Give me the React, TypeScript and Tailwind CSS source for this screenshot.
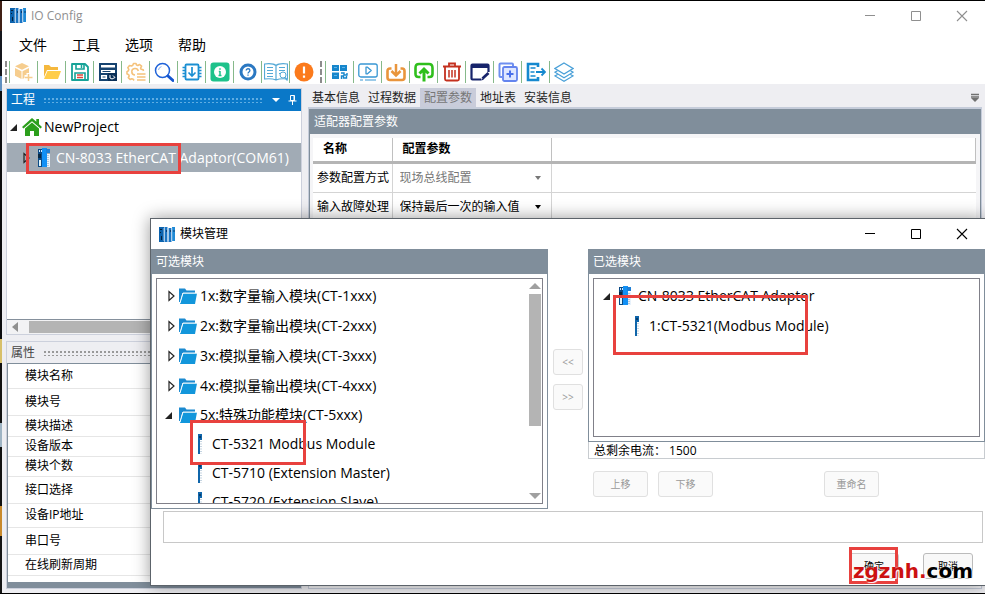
import React, { useState } from "react";
import type { ReactNode } from "react";

/* ---------- icons ---------- */

const Svg = ({ children, size = "size-5", box = "0 0 20 20" }: { children: ReactNode; size?: string; box?: string }) => (
  <svg viewBox={box} className={`${size} block shrink-0`} fill="none" aria-hidden="true">
    {children}
  </svg>
);

const RackIcon = () => (
  <Svg size="size-[17px]" box="0 0 17 17">
    <path d="M0 1h5v15H0z" fill="#0b62ad" />
    <path d="M5.500 1h3v15h-3zM9.500 2h3v14h-3z" fill="#1b75c4" />
    <path d="M13 1h3v14h-3z" fill="#1f8ad6" />
    <path d="M1 3h2v1H1zM1 6h1v1H1zM2 10h1v4H2z" fill="#06213d" />
    <path d="M5 2v13M9 2v13M12.800 2v13" stroke="#d5e8f8" strokeWidth="0.700" />
    <path d="M7 4h1v2H7zM11 4h1v2h-1zM14.500 4h1v2h-1z" fill="#0a3e73" />
  </Svg>
);

const AdaptorIcon = () => (
  <Svg size="w-[14px] h-5" box="0 0 14 20">
    <path d="M1 1h6v18H1z" fill="#0a4a86" />
    <path d="M5 0h5v19H5z" fill="#1190f5" />
    <path d="M9 1h4v4H9z" fill="#1e7fd6" />
    <path d="M10 6h3v13h-3z" fill="#e8f2fb" />
    <path d="M11 7v12" stroke="#7b9cba" strokeDasharray="1 1" />
    <path d="M2 2h1v2H2zM4 2h1v2H4z" fill="#cfe9ff" />
    <path d="M2 12h2v6H2z" fill="#dff6ff" />
    <path d="M1 6h3v4H1z" fill="#062743" />
  </Svg>
);

const ModuleIcon = () => (
  <Svg size="w-1 h-5" box="0 0 4 20">
    <path d="M0 0h2v20H0z" fill="#0f65aa" />
    <path d="M0 0h4v6H0z" fill="#0f65aa" />
    <path d="M3 7v13" stroke="#8ba9c2" strokeDasharray="1 1.500" />
    <path d="M1 2h2v2H1z" fill="#063c6c" />
  </Svg>
);

const FolderIcon = () => (
  <Svg size="w-[18px] h-4" box="0 0 18 16">
    <path d="M0 0.500h6l1.500 2H16V5H3.500L1 14H0z" fill="#1b8ad0" />
    <path d="M4 5.500h14L16 16H1z" fill="#1296db" />
    <path d="M1 15L4 5h14" stroke="#fff" strokeWidth="0.900" />
  </Svg>
);

const HomeIcon = () => (
  <Svg size="w-5 h-[18px]" box="0 0 20 18">
    <path d="M10 0L0 9l1.500 1.600L10 3.200l8.500 7.400L20 9l-3-2.700V1h-2.700v2.800z" fill="#2c9f1c" />
    <path d="M10 4.500L3 10.600V18h5v-5h4v5h5v-7.400z" fill="#2c9f1c" />
  </Svg>
);

const Closed = () => (
  <Svg size="w-[7px] h-3" box="0 0 7 12">
    <path d="M1 1.500v9L6 6z" stroke="#222" strokeWidth="1.200" />
  </Svg>
);
const Opened = () => (
  <Svg size="w-[7px] h-[7px]" box="0 0 7 7">
    <path d="M7 0v7H0z" fill="#222" />
  </Svg>
);

type Tool = { name: string; icon: ReactNode };

const fileTools: Tool[] = [
  {
    name: "新建工程",
    icon: (
      <>
        <path d="M8 1l7 3.300-7 3.500-7-3.500zM1 6l6.500 3.300V17L1 13.800zM15 6L8.500 9.300V17l2-1v-3h2v-2H15z" fill="#f6cd8e" />
        <path d="M14.500 12v7M11 15.500h7.500" stroke="#f6cd8e" strokeWidth="1.500" />
      </>
    ),
  },
  {
    name: "打开",
    icon: (
      <>
        <path d="M2 3h5l2 2h7v3H5l-3 7z" fill="#f5b83d" />
        <path d="M5.500 9H19l-3 8H2z" fill="#ffcd4a" />
      </>
    ),
  },
  {
    name: "保存",
    icon: (
      <>
        <path d="M2 2h13l3 3v13H2z" stroke="#17a398" strokeWidth="1.800" strokeLinejoin="round" />
        <path d="M6 2v5h8V2M5 18v-7h10v7" stroke="#17a398" strokeWidth="1.600" />
        <path d="M11.500 3v3" stroke="#17a398" strokeWidth="1.500" />
        <path d="M7 13h6M7 15.500h6" stroke="#e0453a" strokeWidth="1.300" />
      </>
    ),
  },
  {
    name: "控制台",
    icon: (
      <>
        <path d="M1 1h18v18H1z" fill="#15426f" />
        <path d="M3 3h14v2.500H3zM3 8h14v3H3zM3 13h6v4H3z" fill="#fff" />
        <path d="M4.500 9.500h8M4.500 15h3" stroke="#15426f" />
        <path d="M10 11h9v8h-9z" fill="#0b2f57" />
        <path d="M12 13v3l2 1 3-1.500-2-2" stroke="#fff" />
      </>
    ),
  },
  {
    name: "设置",
    icon: (
      <>
        <path d="M17.500 9l-.3-1.200-2-.5-.6-1.200 1-1.900-2-1.700-1.800 1-1.300-.4L10 1.500H7.500L6.800 3.300 5.500 4 3.500 3.500 1.800 5.700l1 1.700-.4 1.400-1.400.8v2.300l1.700.8.5 1.300-.9 1.600 1.800 1.900 1.700-.8 1.400.5L8 18.500" stroke="#f5c27c" strokeWidth="1.600" strokeLinejoin="round" />
        <path d="M9 13a3.300 3.300 0 1 1 3.300-4" stroke="#f5c27c" strokeWidth="1.500" />
        <path d="M11 12h8.500M11 15h8.500M11 18h8.500" stroke="#f5c27c" strokeWidth="1.500" />
      </>
    ),
  },
  {
    name: "搜索",
    icon: (
      <>
        <circle cx="8.500" cy="8.500" r="7" stroke="#1f62d8" strokeWidth="1.500" />
        <path d="M4.500 8a4 4 0 0 1 3-3.400" stroke="#8ab0f2" />
        <path d="M14 14l5 4.500" stroke="#1656cf" strokeWidth="3" strokeLinecap="round" />
      </>
    ),
  },
  {
    name: "下载",
    icon: (
      <>
        <rect x="3.500" y="2.500" width="13" height="15" rx="1" stroke="#1b8fd2" strokeWidth="1.800" />
        <path d="M0.500 5.500h3M0.500 8.500h3M0.500 11.500h3M0.500 14.500h3M16.500 5.500h3M16.500 8.500h3M16.500 11.500h3M16.500 14.500h3" stroke="#1b8fd2" strokeWidth="1.300" />
        <path d="M10 5v9M6.500 10.500L10 14l3.500-3.500" stroke="#1b8fd2" strokeWidth="1.700" />
      </>
    ),
  },
  {
    name: "信息",
    icon: (
      <>
        <rect x="0.500" y="0.500" width="19" height="19" rx="3" fill="#1ec28b" />
        <circle cx="10" cy="10" r="6" fill="#fff" />
        <path d="M10 6.200v1.600M10 9v4.500M8.800 9.500H10M8.500 13.500h3" stroke="#1ec28b" strokeWidth="1.500" />
      </>
    ),
  },
  {
    name: "帮助",
    icon: (
      <>
        <circle cx="10" cy="10" r="8.500" fill="#2b78c2" />
        <circle cx="10" cy="10" r="5.500" fill="#fff" />
        <path d="M8.200 8.500c0-2.400 3.700-2.300 3.700 0 0 1.400-1.900 1.400-1.900 3M10 12.500v1.300" stroke="#2b78c2" strokeWidth="1.300" />
      </>
    ),
  },
  {
    name: "手册",
    icon: (
      <>
        <path d="M12 3.500C9 1 5 1.500 0.500 2v15c4.500-.5 8-.5 11.500 1 3.500-1.500 7-1.500 11.500-1V2C19 1.500 15 1 12 3.500zV18" stroke="#54a9d6" strokeWidth="1.200" />
        <path d="M3 5.500h6M3 8.500h6M3 11.500h6M3 14.500h6M15 5.500h6M15 8.500h6M15 11.500h2" stroke="#54a9d6" />
        <circle cx="19" cy="13" r="3" fill="#fff" stroke="#54a9d6" />
        <path d="M21 15.500l2.500 3" stroke="#54a9d6" strokeWidth="1.300" />
      </>
    ),
  },
  {
    name: "警告",
    icon: (
      <>
        <circle cx="10" cy="10" r="9.500" fill="#fb7a1c" />
        <path d="M10 4.500v7M10 13.500v2.200" stroke="#fff" strokeWidth="2.200" />
      </>
    ),
  },
];

const deviceTools: Tool[] = [
  {
    name: "扫描",
    icon: (
      <>
        <path d="M2 3h7v6H2zM10 3h7v6h-7zM2 10.500h7v6.500H2z" fill="#1686cc" />
        <path d="M4 5.500h3M12 5.500h3M4 13.500h3" stroke="#5fb4e8" />
        <path d="M11 11h3v2h3v-2M11.500 17v-3h2v2h3v-2" stroke="#1686cc" strokeWidth="1.400" />
      </>
    ),
  },
  {
    name: "监控",
    icon: (
      <>
        <rect x="0.800" y="2" width="18.400" height="13" rx="2" stroke="#3897d3" strokeWidth="1.300" />
        <path d="M8 5.200v6.600h1.500L13.200 8.500 9.500 5.200z" stroke="#3897d3" strokeWidth="1.300" strokeLinejoin="round" />
        <path d="M2 18h3M7 18h11" stroke="#3897d3" strokeWidth="1.200" />
      </>
    ),
  },
  {
    name: "导入",
    icon: (
      <>
        <path d="M5.500 6.500H4q-2.500 0-2.500 2.500v6.500q0 2.500 2.500 2.500h12q2.500 0 2.500-2.500V9q0-2.500-2.500-2.500h-1.500" stroke="#e9953c" strokeWidth="2.600" />
        <path d="M10 2v11M5.500 9l4.500 4.500L14.500 9" stroke="#e9953c" strokeWidth="2.500" />
      </>
    ),
  },
  {
    name: "上传",
    icon: (
      <>
        <path d="M6.500 15H4.500C2.500 15 1.500 14 1.500 12V6C1.500 3 2.500 2 5 2h10c2.500 0 3.500 1 3.500 4v6c0 2-1 3-3 3h-2" stroke="#2fbf1c" strokeWidth="2.600" />
        <path d="M10 19.500V7M5.500 11.500L10 7l4.500 4.500" stroke="#2fbf1c" strokeWidth="3" />
      </>
    ),
  },
  {
    name: "删除",
    icon: (
      <>
        <path d="M1 4.500h18M7 4V1.500h6V4" stroke="#c4301f" strokeWidth="1.800" />
        <path d="M3 5v12q0 1.500 1.500 1.500h11q1.500 0 1.500-1.500V5" stroke="#c4301f" strokeWidth="1.800" />
        <path d="M7 8v7.500M10 8v7.500M13 8v7.500" stroke="#c4301f" strokeWidth="1.500" />
      </>
    ),
  },
  {
    name: "编辑",
    icon: (
      <>
        <path d="M1.500 2h17v4h-17z" fill="#17246b" />
        <path d="M11 17.500H2.500q-1 0-1-1v-13q0-1 1-1h15q1 0 1 1V10" stroke="#17246b" strokeWidth="2.200" />
        <path d="M12.500 16.500l6-5.500" stroke="#17246b" strokeWidth="2.800" />
        <path d="M11 18.500l1-2.500 1.800 1.700z" fill="#17246b" />
      </>
    ),
  },
  {
    name: "复制",
    icon: (
      <>
        <path d="M4 15H2.500q-1 0-1-1V2.500q0-1 1-1H14q1 0 1 1V4" stroke="#6f8ff0" strokeWidth="2" />
        <rect x="5" y="5" width="14" height="14" rx="1.500" stroke="#6484ee" strokeWidth="1.800" fill="#dfe7ff" />
        <path d="M12 8.500v7M8.500 12h7" stroke="#4a70ea" strokeWidth="2" />
      </>
    ),
  },
  {
    name: "导出",
    icon: (
      <>
        <path d="M12 5V2H2v16h10v-3" stroke="#1689cf" strokeWidth="2.600" />
        <path d="M4.500 6h5M4.500 10h4M4.500 14h5" stroke="#1689cf" strokeWidth="1.600" />
        <path d="M10 10h9M15.500 6.500L19 10l-3.500 3.500" stroke="#1689cf" strokeWidth="1.800" />
      </>
    ),
  },
  {
    name: "图层",
    icon: (
      <>
        <path d="M10 1l9 5.500-9 5.500-9-5.500z" stroke="#4aa0d8" strokeWidth="1.300" />
        <path d="M3.500 8.700L1 10.200l9 5.500 9-5.500-2.500-1.500M3.500 12.400L1 13.900l9 5.300 9-5.300-2.500-1.500" stroke="#4aa0d8" strokeWidth="1.200" />
      </>
    ),
  },
];

/* ---------- shared pieces ---------- */

const Grip = () => <span className="h-[22px] w-0 border-l-2 border-dashed border-[#8c8c8c]" />;

const ToolStrip = ({ tools }: { tools: Tool[] }) => (
  <div className="flex">
    {tools.map((t) => (
      <button
        key={t.name}
        type="button"
        aria-label={t.name}
        className="flex h-[22px] w-7 items-center justify-center border-l border-[#86b98a]"
      >
        <Svg size={t.name === "手册" ? "w-6 h-5" : "size-5"} box={t.name === "手册" ? "0 0 24 20" : "0 0 20 20"}>
          {t.icon}
        </Svg>
      </button>
    ))}
  </div>
);

const WindowControls = ({ color }: { color: string }) => (
  <div className={`ml-auto flex ${color}`}>
    <button type="button" aria-label="最小化" className="flex h-7 w-[46px] items-center justify-center">
      <Svg size="size-3" box="0 0 12 12">
        <path d="M1 5.500h10" stroke="currentColor" />
      </Svg>
    </button>
    <button type="button" aria-label="最大化" className="flex h-7 w-[46px] items-center justify-center">
      <Svg size="size-3" box="0 0 12 12">
        <path d="M1.500 1.500h9v9h-9z" stroke="currentColor" />
      </Svg>
    </button>
    <button type="button" aria-label="关闭" className="flex h-7 w-[46px] items-center justify-center">
      <Svg size="size-3" box="0 0 12 12">
        <path d="M1 1l10 10M11 1L1 11" stroke="currentColor" strokeWidth="1.100" />
      </Svg>
    </button>
  </div>
);

const Dots = ({ color }: { color: string }) => (
  <span
    className={`h-[6px] min-w-0 flex-1 bg-[length:4px_4px] ${color}`}
  />
);

const Mark = ({ place }: { place: string }) => (
  <span className={`pointer-events-none absolute z-20 border-[3px] border-[#e8413e] ${place}`} />
);

/* ---------- main window ---------- */

const properties: [string, string][] = [
  ["模块名称", "h-6"],
  ["模块号", "h-[27px]"],
  ["模块描述", "h-[21px]"],
  ["设备版本", "h-5"],
  ["模块个数", "h-5"],
  ["接口选择", "h-[27px]"],
  ["设备IP地址", "h-6"],
  ["串口号", "h-[27px]"],
  ["在线刷新周期", "h-[21px]"],
];

const ProjectPanel = () => (
  <section className="flex h-[247px] flex-col border border-[#ccd0dc] bg-white">
    <header className="flex h-[22px] shrink-0 items-center gap-2 bg-[#0a78c8] px-1 text-xs text-white">
      <h2>工程</h2>
      <Dots color="bg-[radial-gradient(circle,#5fade3_0.8px,transparent_1px)]" />
      <Svg size="w-2 h-1" box="0 0 8 4">
        <path d="M0 0h8L4 4z" fill="#fff" />
      </Svg>
      <Svg size="w-[9px] h-[10px]" box="0 0 9 10">
        <path d="M2.500 0.500h4v5h-4zM0.500 6h8M4.500 6v4M6 0.500v5" stroke="#fff" />
      </Svg>
    </header>
    <ul className="flex-1 text-sm whitespace-nowrap">
      <li className="flex h-8 items-center gap-[5px] pl-[3px]">
        <Opened />
        <HomeIcon />
        <span className="-ml-[3px]">NewProject</span>
      </li>
      <li className="relative flex h-[29px] items-center bg-[#a1abb5] pl-4 text-white">
        <Closed />
        <span className="mr-[5px] ml-[7px]">
          <AdaptorIcon />
        </span>
        <span>CN-8033 EtherCAT Adaptor(COM61)</span>
        <Mark place="top-0 left-[19px] h-[31px] w-[155px]" />
      </li>
    </ul>
    <div className="flex h-[15px] shrink-0 items-center border-t border-[#85909c] bg-[#f2f2f4] pl-[5px]">
      <Svg size="w-[6px] h-[10px]" box="0 0 6 10">
        <path d="M6 0v10L0 5z" fill="#8f8f8f" />
      </Svg>
      <span className="ml-[11px] h-3 w-56 bg-[#b4b4b4]" />
    </div>
  </section>
);

const PropertyPanel = () => (
  <section className="flex flex-col border border-[#ccd0dc]">
    <header className="flex h-[21px] items-center gap-2 bg-[#eeeef2] px-1 text-xs text-[#444]">
      <h2>属性</h2>
      <Dots color="bg-[radial-gradient(circle,#999_0.8px,transparent_1px)]" />
    </header>
    <div className="border-t border-l border-[#808e9b] bg-white pb-[6px]">
      <table className="w-full border-collapse text-xs">
        <tbody>
          {properties.map(([name, h]) => (
            <tr key={name} className={`${h} border-b border-[#e6e6e6]`}>
              <th scope="row" className="p-0 pl-[17px] text-left leading-[18px] font-normal">
                {name}
              </th>
            </tr>
          ))}
        </tbody>
      </table>
    </div>
    <div className="h-[6px] bg-[#808e9b]" />
  </section>
);

const Combo = ({ label, value, disabled }: { label: string; value: string; disabled?: boolean }) => (
  <div className={`relative ${disabled ? "text-[#777]" : "text-black"}`}>
    <select
      aria-label={label}
      disabled={disabled}
      defaultValue={value}
      className="h-7 w-full appearance-none bg-transparent pl-[7px] text-xs opacity-100"
    >
      <option>{value}</option>
    </select>
    <span className="pointer-events-none absolute top-3 right-[10px]">
      <Svg size="w-[6px] h-1" box="0 0 6 4">
        <path d="M0 0h6L3 4z" fill="currentColor" />
      </Svg>
    </span>
  </div>
);

const ParameterPanel = () => {
  const tabs = ["基本信息", "过程数据", "配置参数", "地址表", "安装信息"];
  const [active, setActive] = useState("配置参数");
  return (
    <section className="flex min-w-0 flex-1 flex-col">
      <div className="flex h-[19px] items-stretch text-xs" role="tablist">
        {tabs.map((t) => (
          <button
            key={t}
            type="button"
            role="tab"
            aria-selected={t === active}
            onClick={() => setActive(t)}
            className={`px-1 whitespace-nowrap ${t === active ? "bg-[#c9ccda] text-[#777]" : "text-[#1e1e1e]"}`}
          >
            {t}
          </button>
        ))}
        <span className="mr-[3px] ml-auto self-center">
          <Svg size="w-2 h-[9px]" box="0 0 8 9">
            <path d="M0 1.500h8M0 4h8" stroke="#717171" strokeWidth="1.400" />
            <path d="M0 5h8L4 9z" fill="#717171" />
          </Svg>
        </span>
      </div>
      <div className="flex-1 border border-t-2 border-[#c5ccda] bg-[#f5f5f7]">
        <h2 className="h-[25px] bg-[#808e9b] pl-[5px] text-xs leading-[25px] text-white">适配器配置参数</h2>
        <div className="border-x border-[#808e9b] pt-1 pr-1 pl-[3px]">
          <table className="w-full table-fixed border-collapse bg-white text-xs">
            <colgroup>
              <col className="w-[79px]" />
              <col className="w-[159px]" />
              <col />
            </colgroup>
            <thead>
              <tr className="h-6 border-b-[3px] border-[#b5b5b5] text-left">
                <th className="border-r border-[#c0c0c0] py-0 pl-[10px] font-bold">名称</th>
                <th className="border-r border-[#c0c0c0] py-0 pl-[10px] font-bold">配置参数</th>
                <th className="border-r border-[#c0c0c0]" aria-label="备注" />
              </tr>
            </thead>
            <tbody>
              <tr className="h-[29px] border-b border-[#d4d4d4]">
                <td className="border-r border-[#d4d4d4] pl-1 whitespace-nowrap">参数配置方式</td>
                <td className="border-r border-[#d4d4d4]">
                  <Combo label="参数配置方式" value="现场总线配置" disabled />
                </td>
                <td />
              </tr>
              <tr className="h-[29px] border-b border-[#d4d4d4]">
                <td className="border-r border-[#d4d4d4] pl-1 whitespace-nowrap">输入故障处理</td>
                <td className="border-r border-[#d4d4d4]">
                  <Combo label="输入故障处理" value="保持最后一次的输入值" />
                </td>
                <td />
              </tr>
            </tbody>
          </table>
        </div>
      </div>
    </section>
  );
};

/* ---------- module dialog ---------- */

const groups = [
  "1x:数字量输入模块(CT-1xxx)",
  "2x:数字量输出模块(CT-2xxx)",
  "3x:模拟量输入模块(CT-3xxx)",
  "4x:模拟量输出模块(CT-4xxx)",
];
const modules = ["CT-5321 Modbus Module", "CT-5710 (Extension Master)", "CT-5720 (Extension Slave)"];

const SmallButton = ({ children, size }: { children: ReactNode; size: string }) => (
  <button
    type="button"
    disabled
    className={`${size} rounded-[3px] border border-[#e0e0e0] bg-[#fafafa] text-[10px] text-[#999]`}
  >
    {children}
  </button>
);

const PanelTitle = ({ children }: { children: ReactNode }) => (
  <h3 className="h-[25px] shrink-0 bg-[#808e9b] pl-1 text-xs leading-[26px] text-white">{children}</h3>
);

const AvailableModules = () => (
  <section className="flex h-[260px] w-[397px] shrink-0 flex-col border border-t-0 border-[#808e9b]">
    <PanelTitle>可选模块</PanelTitle>
    <div className="relative m-1 flex min-h-0 flex-1 border border-[#808089]">
      <ul className="min-w-0 flex-1 overflow-hidden pt-[2px] text-sm whitespace-nowrap">
        {groups.map((g) => (
          <li key={g} className="flex h-[30px] items-center pl-[11px]">
            <Closed />
            <span className="mr-[3px] ml-1">
              <FolderIcon />
            </span>
            {g}
          </li>
        ))}
        <li>
          <div className="flex h-7 items-center pl-2">
            <Opened />
            <span className="mr-[3px] ml-[7px]">
              <FolderIcon />
            </span>
            5x:特殊功能模块(CT-5xxx)
          </div>
          <ul>
            {modules.map((m) => (
              <li key={m} className="flex h-[29px] items-center gap-[10px] pl-[41px]">
                <ModuleIcon />
                {m}
              </li>
            ))}
          </ul>
        </li>
      </ul>
      <div className="flex w-[15px] flex-col items-center py-1">
        <Svg size="w-3 h-[6px]" box="0 0 12 6">
          <path d="M0 6h12L6 0z" fill="#a0a0a0" />
        </Svg>
        <span className="mt-[5px] h-[132px] w-3 bg-[#b4b4b4]" />
        <span className="mt-auto">
          <Svg size="w-3 h-[6px]" box="0 0 12 6">
            <path d="M0 0h12L6 6z" fill="#a0a0a0" />
          </Svg>
        </span>
      </div>
      <Mark place="top-[141px] left-[33px] h-[45px] w-[116px]" />
    </div>
  </section>
);

const SelectedModules = () => (
  <section className="min-w-0 flex-1">
    <div className="flex h-[193px] flex-col border border-t-0 border-[#808e9b]">
      <PanelTitle>已选模块</PanelTitle>
      <div className="relative m-1 flex-1 border border-[#808089] pt-[2px] text-sm whitespace-nowrap">
        <div className="flex h-[30px] items-center pl-[9px]">
          <Opened />
          <span className="mr-[6px] ml-2">
            <AdaptorIcon />
          </span>
          CN-8033 EtherCAT Adaptor
        </div>
        <div className="flex h-[29px] items-center gap-[10px] pl-[41px]">
          <ModuleIcon />
          1:CT-5321(Modbus Module)
        </div>
        <Mark place="top-4 left-[19px] h-[60px] w-[195px]" />
      </div>
    </div>
    <p className="h-[17px] border border-t-0 border-[#c8ccd0] pl-[5px] text-xs leading-[18px]">总剩余电流：&nbsp;1500</p>
    <div className="flex gap-[10px] pt-3 pr-[106px] pl-[5px]">
      <SmallButton size="h-[26px] w-[55px]">上移</SmallButton>
      <SmallButton size="h-[26px] w-[55px]">下移</SmallButton>
      <div className="ml-auto flex">
        <SmallButton size="h-[26px] w-[55px]">重命名</SmallButton>
      </div>
    </div>
  </section>
);

const ModuleDialog = () => (
  <div
    role="dialog"
    aria-label="模块管理"
    className="absolute top-[218px] right-0 left-[150px] z-10 border border-r-0 border-[#5c636a] bg-white pb-[6px] shadow-[0_0_16px_rgba(0,0,0,0.4)]"
  >
    <header className="flex h-[30px] items-center pl-2 text-xs">
      <RackIcon />
      <h2 className="ml-1">模块管理</h2>
      <WindowControls color="text-black" />
    </header>
    <div className="flex">
      <AvailableModules />
      <div className="flex w-10 shrink-0 flex-col items-center gap-[9px] pt-[100px]">
        <SmallButton size="h-[26px] w-[30px]">&lt;&lt;</SmallButton>
        <SmallButton size="h-[26px] w-[30px]">&gt;&gt;</SmallButton>
      </div>
      <SelectedModules />
    </div>
    <div className="mt-[2px] pr-[2px] pl-3">
      <input aria-label="提示" readOnly className="block h-8 w-full border border-[#c8c8c8] bg-white" />
    </div>
    <footer className="relative flex justify-end gap-6 pt-[10px] pr-3">
      <button type="button" className="h-[26px] w-[50px] rounded-[3px] border border-[#ccc] bg-[#f8f8f8] text-[10px]">
        确定
      </button>
      <button type="button" className="h-[26px] w-[50px] rounded-[3px] border border-[#bbb] bg-[#f8f8f8] text-[10px]">
        取消
      </button>
      <Mark place="top-1 right-[87px] h-[37px] w-[49px]" />
      <span className="absolute top-4 right-3 z-30 font-['DejaVu_Sans'] text-[20px] leading-6 font-bold text-black [text-shadow:0_0_1px_white,1px_1px_1px_white]">
        <span className="text-[#cc1111]">zgznh.</span>com
      </span>
    </footer>
  </div>
);

export default function App() {
  return (
    <div className="relative flex min-h-screen overflow-hidden bg-black pt-px pb-[3px] font-['Open_Sans','Noto_Sans_CJK_SC',sans-serif] text-black">
      <div className="w-[2px] shrink-0 bg-[linear-gradient(#402015_0_30px,#15171c_30px_75px,#5f8fc0_75px_90px,#0c0c0e_90px_338px,#d8c06a_338px_362px,#111_362px_422px,#9fb4c4_422px_446px,#111_446px_505px,#c98a2c_505px_535px,#151515_535px)]" />
      <main className="flex min-w-0 flex-1 flex-col bg-[#eeeef2]">
        <div className="bg-white">
          <header className="flex h-[29px] items-center pl-2 text-xs text-[#8f8f8f]">
            <RackIcon />
            <h1 className="ml-1">IO Config</h1>
            <WindowControls color="text-[#8f8f8f]" />
          </header>
          <nav className="flex h-[30px] items-center gap-[25px] pl-[17px] text-sm">
            {["文件", "工具", "选项", "帮助"].map((m) => (
              <button key={m} type="button">
                {m}
              </button>
            ))}
          </nav>
          <div className="flex h-6 items-center pl-[3px]">
            <Grip />
            <div className="mr-[3px] ml-[2px]">
              <ToolStrip tools={fileTools} />
            </div>
            <Grip />
            <div className="ml-[3px]">
              <ToolStrip tools={deviceTools} />
            </div>
          </div>
        </div>
        <div className="flex flex-1 gap-[6px] pt-1 pr-[3px] pb-1 pl-1">
          <div className="flex w-[296px] shrink-0 flex-col gap-[6px]">
            <ProjectPanel />
            <PropertyPanel />
          </div>
          <ParameterPanel />
        </div>
      </main>
      <ModuleDialog />
    </div>
  );
}
